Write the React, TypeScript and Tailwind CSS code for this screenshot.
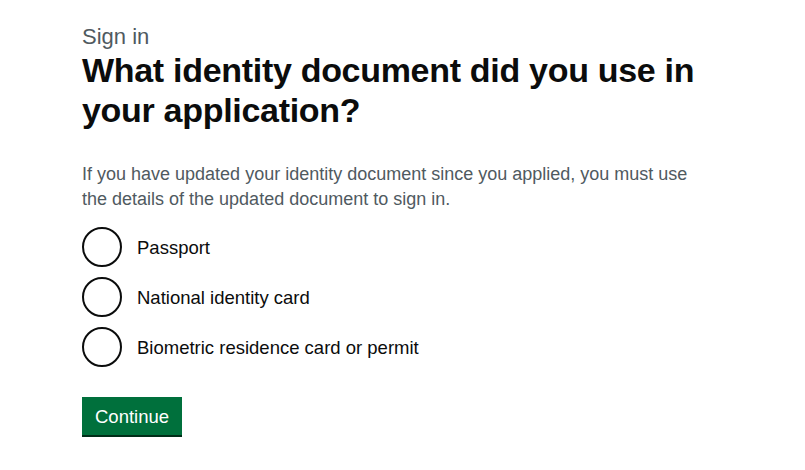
const options = [
  { id: "passport", label: "Passport" },
  { id: "national-id", label: "National identity card" },
  { id: "brp", label: "Biometric residence card or permit" },
];

export default function App() {
  return (
    <div className="min-h-[470px] bg-white px-[82px] pt-[24px] font-['Liberation_Sans',Arial,sans-serif] text-[#0b0c0c]">
      <span className="block text-[22px] leading-[25px] text-[#505a5f]">Sign in</span>
      <h1 className="mt-[1px] max-w-[640px] text-[34px] font-bold leading-[40px] tracking-[-0.3px]">
        What identity document did you use in your application?
      </h1>
      <p className="mt-[32px] max-w-[620px] text-[18px] leading-[25px] text-[#505a5f]">
        If you have updated your identity document since you applied, you must use the details of
        the updated document to sign in.
      </p>
      <div className="mt-[15px] flex flex-col gap-[10px]">
        {options.map((o) => (
          <label key={o.id} className="flex cursor-pointer items-center gap-[15px]">
            <input type="radio" name="doc" className="peer sr-only" />
            <span className="h-[40px] w-[40px] rounded-full border-2 border-[#0b0c0c]" />
            <span className="text-[18.5px] leading-[25px]">{o.label}</span>
          </label>
        ))}
      </div>
      <button
        type="button"
        className="mt-[30px] bg-[#00703c] px-[13px] pb-[7px] pt-[8px] text-[18.5px] leading-[23px] text-white shadow-[0_2px_0_#002d18]"
      >
        Continue
      </button>
    </div>
  );
}
